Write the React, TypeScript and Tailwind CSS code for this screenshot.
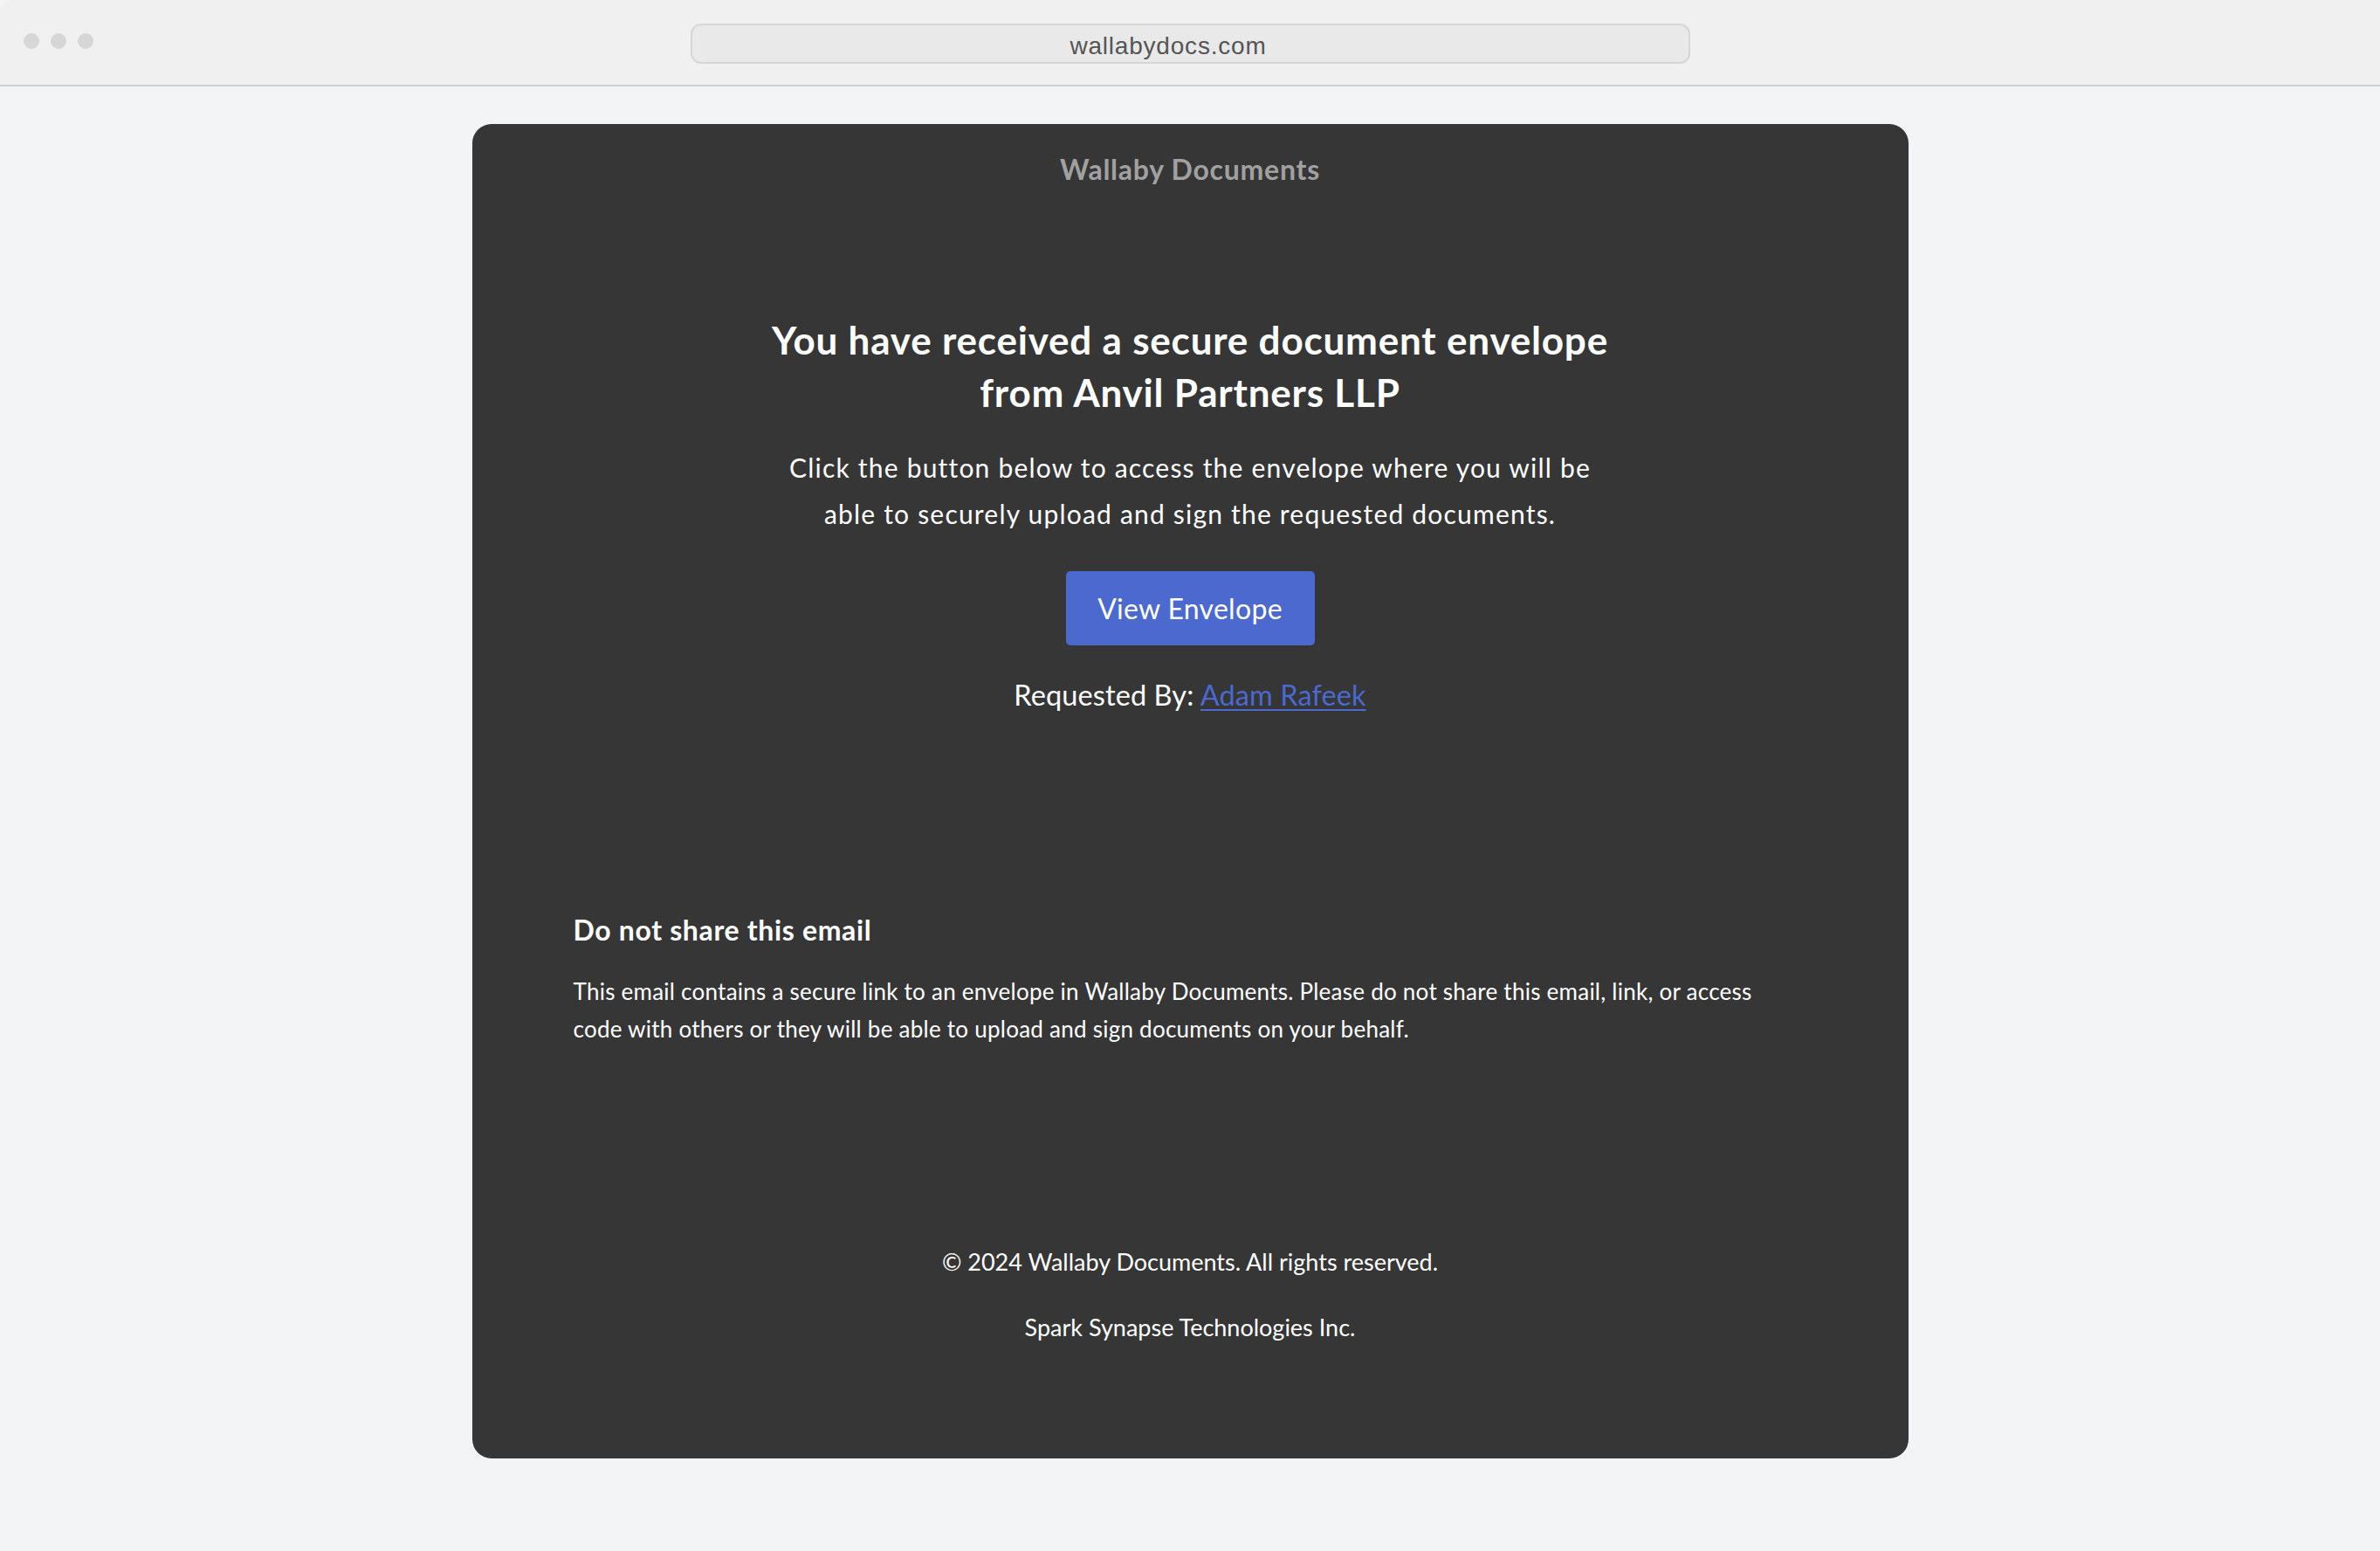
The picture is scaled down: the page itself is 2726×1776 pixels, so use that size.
import React from "react";

export default function App() {
  return (
    <div
      className="min-h-screen w-full bg-[#f3f4f6] flex flex-col"
      style={{ fontFamily: "Lato, 'Noto Sans', sans-serif" }}
    >
      {/* Browser chrome */}
      <div className="h-[99px] bg-[#f0f0f0] border-b-2 border-[#cdcdcd] grid grid-cols-[1fr_1145px_1fr] rounded-tl-[14px]">
        <div className="flex gap-[13px] pl-[27px] pt-[38px]">
          <span className="w-[18px] h-[18px] rounded-full bg-[#d6d6d8]" />
          <span className="w-[18px] h-[18px] rounded-full bg-[#d6d6d8]" />
          <span className="w-[18px] h-[18px] rounded-full bg-[#d6d6d8]" />
        </div>
        <div className="pt-[27px]">
          <div
            className="h-[46px] rounded-[12px] border-2 border-[#d6d6d6] bg-[#e9e9e9] flex items-center justify-center pt-[6px] pr-[50px] text-[28px] leading-[32px] tracking-[0.8px] text-[#555555]"
            style={{ fontFamily: "'Liberation Sans', Arial, sans-serif" }}
          >
            wallabydocs.com
          </div>
        </div>
        <div />
      </div>

      {/* Email */}
      <main className="flex justify-center pt-[43px] pb-[100px]">
        <div className="w-[1645px] rounded-[22px] bg-[#363636] pt-[32px] pb-[130px] px-[116px] flex flex-col items-center text-white">
          <div className="text-[32px] leading-[40px] font-bold tracking-[0.75px] text-[#a1a1a1]">
            Wallaby Documents
          </div>

          <h1 className="mt-[145px] text-[44px] leading-[60px] font-bold tracking-[0.8px] text-center">
            You have received a secure document envelope
            <br />
            from Anvil Partners LLP
          </h1>

          <p className="mt-[30px] text-[30px] leading-[53px] tracking-[1.2px] text-center">
            Click the button below to access the envelope where you will be
            <br />
            able to securely upload and sign the requested documents.
          </p>

          <a
            href="#"
            className="mt-[39px] w-[285px] h-[85px] rounded-[5px] bg-[#4b69cf] flex items-center justify-center text-[32px] tracking-[0.3px] text-white"
          >
            View Envelope
          </a>

          <div className="mt-[37px] text-[32.5px] leading-[40px] tracking-[0.1px]">
            Requested By:{" "}
            <a href="#" className="text-[#4b69cf] underline underline-offset-[4px] decoration-[2px]">
              Adam Rafeek
            </a>
          </div>

          <div className="mt-[229px] self-stretch">
            <h2 className="text-[32px] leading-[40px] font-bold tracking-[0.65px]">Do not share this email</h2>
            <p className="mt-[29px] text-[26px] leading-[42.5px] tracking-[0.25px]">
              This email contains a secure link to an envelope in Wallaby Documents. Please do not share this email, link, or access
              <br />
              code with others or they will be able to upload and sign documents on your behalf.
            </p>
          </div>

          <div className="mt-[226px] flex flex-col items-center text-[27px] leading-[40px] gap-[35px]">
            <div>© 2024 Wallaby Documents. All rights reserved.</div>
            <div>Spark Synapse Technologies Inc.</div>
          </div>
        </div>
      </main>
    </div>
  );
}
